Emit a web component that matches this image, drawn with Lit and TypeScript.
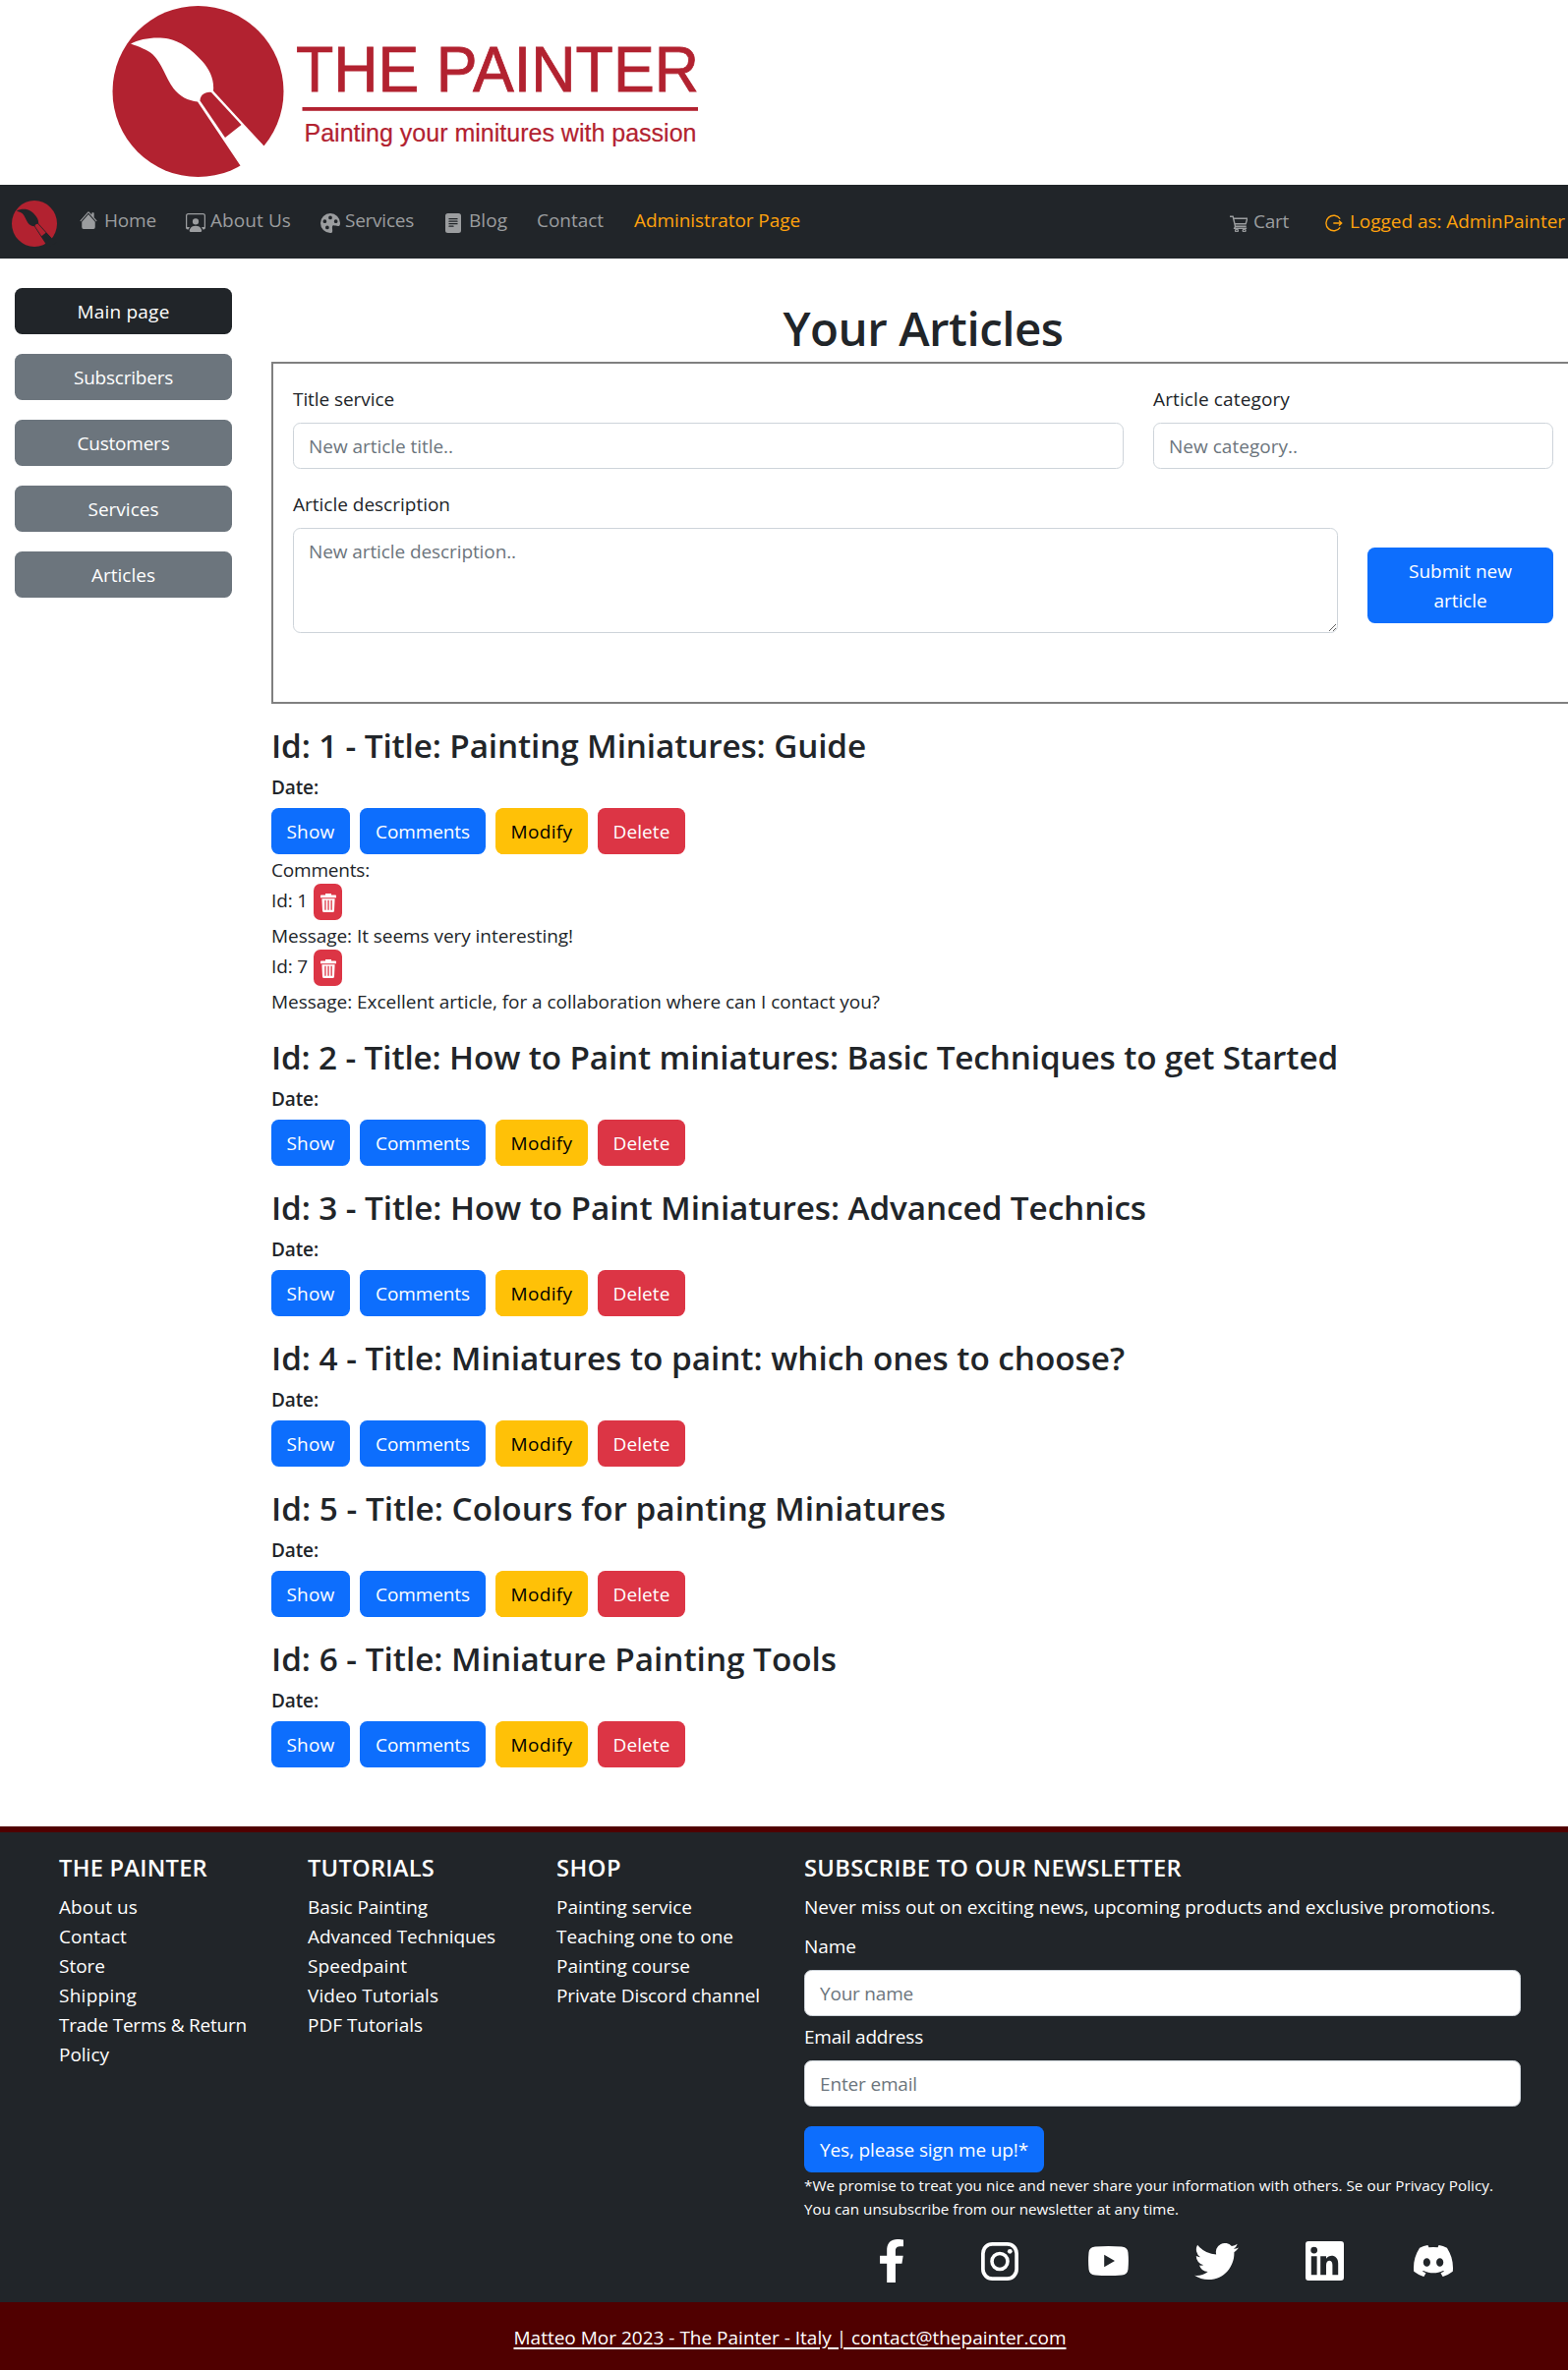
import { LitElement, html, css, svg } from "lit";
import { customElement } from "lit/decorators.js";

const icon = (viewBox: string, w: number, h: number, body: unknown, cls = "") =>
  html`<svg class="icon ${cls}" viewBox=${viewBox} width=${w} height=${h} fill="currentColor" preserveAspectRatio="none">${body}</svg>`;

const house = svg`<path d="M8.707 1.5a1 1 0 0 0-1.414 0L.646 8.146a.5.5 0 0 0 .708.708L8 2.207l6.646 6.647a.5.5 0 0 0 .708-.708L13 5.793V2.5a.5.5 0 0 0-.5-.5h-1a.5.5 0 0 0-.5.5v1.293z"/><path d="m8 3.293 6 6V13.5a1.5 1.5 0 0 1-1.5 1.5h-9A1.5 1.5 0 0 1 2 13.5V9.293z"/>`;
const workspace = svg`<path d="M4 16s-1 0-1-1 1-4 5-4 5 3 5 4-1 1-1 1zm4-5.95a2.5 2.5 0 1 0 0-5 2.5 2.5 0 0 0 0 5"/><path d="M2 1a2 2 0 0 0-2 2v9.5A1.5 1.5 0 0 0 1.5 14h.653a5.4 5.4 0 0 1 1.066-2H1V3a1 1 0 0 1 1-1h12a1 1 0 0 1 1 1v9h-2.219c.554.654.89 1.373 1.066 2h.653a1.5 1.5 0 0 0 1.5-1.5V3a2 2 0 0 0-2-2z"/>`;
const palette = svg`<path d="M12.433 10.07C14.133 10.585 16 11.15 16 8a8 8 0 1 0-8 8c1.996 0 1.826-1.504 1.649-3.08-.124-1.101-.252-2.237.351-2.92.465-.527 1.42-.237 2.433.07M8 5a1.5 1.5 0 1 1 0-3 1.5 1.5 0 0 1 0 3m4.5 3a1.5 1.5 0 1 1 0-3 1.5 1.5 0 0 1 0 3M5 6.5a1.5 1.5 0 1 1-3 0 1.5 1.5 0 0 1 3 0m.5 6.5a1.5 1.5 0 1 1 0-3 1.5 1.5 0 0 1 0 3"/>`;
const fileText = svg`<path d="M12 0H4a2 2 0 0 0-2 2v12a2 2 0 0 0 2 2h8a2 2 0 0 0 2-2V2a2 2 0 0 0-2-2M5 4h6a.5.5 0 0 1 0 1H5a.5.5 0 0 1 0-1m-.5 2.5A.5.5 0 0 1 5 6h6a.5.5 0 0 1 0 1H5a.5.5 0 0 1-.5-.5M5 8h6a.5.5 0 0 1 0 1H5a.5.5 0 0 1 0-1m0 2h3a.5.5 0 0 1 0 1H5a.5.5 0 0 1 0-1"/>`;
const cart = svg`<g fill="none" stroke="currentColor" stroke-width="1.3"><path d="M0 1.2h3l2.2 9.4h10.6M3.4 3h13.4l-1.5 5.2H4.7M5.2 10.6l-.8 1.9h11.8"/><circle cx="6.6" cy="14.6" r="1.3"/><circle cx="13.8" cy="14.6" r="1.3"/></g>`;
const logout = svg`<g fill="none" stroke="currentColor" stroke-width="1.4"><path d="M15.2 4.7A7.8 7.8 0 1 0 15.2 13.3M8.3 9h8.4M14 6.4 16.7 9 14 11.6"/></g>`;
const trash = svg`<path d="M5 0h6v1.7h4.2q.8 0 .8.8v1.9H0V2.500q0-.8.8-.8H5z"/><path fill-rule="evenodd" d="M1.400 5.400h13.200l-.6 12.900q-.1 1.700-1.700 1.700H3.700q-1.600 0-1.700-1.700zM4.300 7v10.500h1.300V7zm3.100 0v10.500h1.300V7zm3.100 0v10.500h1.300V7z"/>`;

const facebook = svg`<path d="M279.14 288l14.22-92.66h-88.91v-60.13c0-25.35 12.42-50.06 52.24-50.06h40.42V6.260S260.43 0 225.36 0c-73.22 0-121.080 44.38-121.080 124.72v70.62H22.89V288h81.39v224h100.17V288z"/>`;
const instagram = svg`<rect x="1.9" y="1.9" width="34.2" height="35.2" rx="9.500" fill="none" stroke="currentColor" stroke-width="3.700"/><circle cx="19" cy="19.500" r="8" fill="none" stroke="currentColor" stroke-width="3.600"/><circle cx="29.300" cy="9.300" r="2.400"/>`;
const youtube = svg`<path fill-rule="evenodd" d="M7 .6Q20.500-.6 34 .6q6 .5 6.500 6 .8 8.400 0 16.800-.5 5.500-6.500 6-13.500 1.200-27 0-6-.5-6.500-6-.8-8.400 0-16.800Q1 1.100 7 .6zM16.200 8.800v12.400L27 15z"/>`;
const twitter = svg`<path d="M5.026 15c6.038 0 9.341-5.003 9.341-9.334q.002-.211-.006-.422A6.700 6.700 0 0 0 16 3.542a6.700 6.700 0 0 1-1.889.518 3.300 3.300 0 0 0 1.447-1.817 6.500 6.500 0 0 1-2.087.793A3.286 3.286 0 0 0 7.875 6.030a9.320 9.320 0 0 1-6.767-3.429 3.290 3.290 0 0 0 1.018 4.382A3.300 3.300 0 0 1 .64 6.575v.045a3.290 3.290 0 0 0 2.632 3.218 3.200 3.200 0 0 1-.865.115 3 3 0 0 1-.614-.057 3.280 3.280 0 0 0 3.067 2.277A6.600 6.600 0 0 1 .78 13.580a6 6 0 0 1-.78-.045A9.340 9.340 0 0 0 5.026 15"/>`;
const linkedin = svg`<path fill-rule="evenodd" d="M3 0h33q3 0 3 3v33.500q0 3-3 3H3q-3 0-3-3V3q0-3 3-3zM5.800 15v18.700h5.800V15zM8.700 5.600a3.400 3.400 0 1 0 0 6.800 3.400 3.400 0 1 0 0-6.800zM15.200 15v18.700H21v-9.800c0-5.600 6.400-5.700 6.400-.3v10.100h5.800V22.400c0-9-9-9.600-12.200-4.800V15z"/>`;
const discord = svg`<path d="M13.545 2.907a13.200 13.200 0 0 0-3.257-1.011.05.05 0 0 0-.052.025c-.141.25-.297.577-.406.833a12.200 12.200 0 0 0-3.658 0 8 8 0 0 0-.412-.833.05.05 0 0 0-.052-.025c-1.125.194-2.220.534-3.257 1.011a.04.04 0 0 0-.021.018C.356 6.024-.213 9.047.066 12.032q.003.022.021.037a13.300 13.300 0 0 0 3.995 2.020.05.05 0 0 0 .056-.019q.463-.63.818-1.329a.05.05 0 0 0-.01-.059l-.018-.011a9 9 0 0 1-1.248-.595.05.05 0 0 1-.02-.066l.015-.019q.127-.095.248-.195a.05.05 0 0 1 .051-.007c2.619 1.196 5.454 1.196 8.041 0a.05.05 0 0 1 .053.007q.121.1.248.195a.05.05 0 0 1-.004.085 8 8 0 0 1-1.249.594.05.05 0 0 0-.03.03.05.05 0 0 0 .003.041c.24.465.515.909.817 1.329a.05.05 0 0 0 .056.019 13.200 13.200 0 0 0 4.001-2.020.05.05 0 0 0 .021-.037c.334-3.451-.559-6.449-2.366-9.106a.03.03 0 0 0-.02-.019m-8.198 7.307c-.789 0-1.438-.724-1.438-1.612s.637-1.613 1.438-1.613c.807 0 1.450.73 1.438 1.613 0 .888-.637 1.612-1.438 1.612m5.316 0c-.788 0-1.438-.724-1.438-1.612s.637-1.613 1.438-1.613c.807 0 1.451.73 1.438 1.613 0 .888-.631 1.612-1.438 1.612"/>`;

// Disc with a paint brush cut out of it, in a 174 x 174 box; `ground` is the colour behind the disc.
const brush = (ground: string) => svg`<circle cx="87" cy="87" r="87" fill="#b22230"/>
  <path fill=${ground} d="M18.500 38.500C28 33 45 31 57 33.500C69 36 80 44 91 56C99 65 103.500 75 102.500 86L103 92L153 141.500L172 158L140 177L129 161L86.500 97.500C77 96.500 68 92 62 84C54 73 50 58 41 49.500C36 45 27 41.500 18.500 38.500z"/>
  <path fill=${ground} d="M102 86L153 141.500L140 150L100 92z"/>
  <path fill="#b22230" d="M89 96.500C89 91 94 87 100.500 88L131 121L114.500 134z"/>`;

/** Text whose tracking is set so that it runs to the given width. */
const fit = (text: string, w: number) => html`<span class="fit" data-w=${w}>${text}</span>`;

const articles: [string, number][] = [
  ["Id: 1 - Title: Painting Miniatures: Guide", 604],
  ["Id: 2 - Title: How to Paint miniatures: Basic Techniques to get Started", 1084],
  ["Id: 3 - Title: How to Paint Miniatures: Advanced Technics", 889],
  ["Id: 4 - Title: Miniatures to paint: which ones to choose?", 867],
  ["Id: 5 - Title: Colours for painting Miniatures", 685],
  ["Id: 6 - Title: Miniature Painting Tools", 574],
];
const comments: [string, string, number][] = [
  ["Id: 1", "Message: It seems very interesting!", 306],
  ["Id: 7", "Message: Excellent article, for a collaboration where can I contact you?", 618],
];
const side: [string, number][] = [["Main page", 93], ["Subscribers", 100], ["Customers", 93], ["Services", 71], ["Articles", 64]];
const columns: { head: [string, number]; items: [string, number][] }[] = [
  { head: ["THE PAINTER", 150], items: [["About us", 79], ["Contact", 68], ["Store", 46], ["Shipping", 78], ["Trade Terms & Return", 190], ["Policy", 50]] },
  { head: ["TUTORIALS", 128], items: [["Basic Painting", 121], ["Advanced Techniques", 190], ["Speedpaint", 100], ["Video Tutorials", 132], ["PDF Tutorials", 116]] },
  { head: ["SHOP", 65], items: [["Painting service", 137], ["Teaching one to one", 179], ["Painting course", 135], ["Private Discord channel", 206]] },
];

@customElement("app-root")
export class AppRoot extends LitElement {
  static styles = css`
    :host { display: block; width: 1595px; height: 2411px; overflow: hidden; background: #fff; color: #212529;
      font: 400 19px/30px "Open Sans", "Noto Sans", sans-serif; }
    * { box-sizing: border-box; }
    .icon { display: block; flex: none; }
    .fit { white-space: nowrap; }
    h1, h2, h3, h4, p, ul { margin: 0; padding: 0; font-weight: 600; }
    p, ul { font-weight: 400; }
    .banner { height: 188px; padding-left: 100px; }
    .banner svg { display: block; }
    nav { height: 75px; background: #212529; display: flex; color: #9b9d9f; padding-left: 12px; align-items: center; }
    .mark { margin: 4px 23px 0 0; }
    .item { display: flex; align-items: center; height: 30px; margin-top: -2px; }
    .item .fit { padding-bottom: 1px; }
    .low { margin-top: 4px; }
    .home { width: 108px; gap: 7px; }
    .home .icon { margin-top: -2px; }
    .about { width: 137px; gap: 5px; }
    .serv { width: 127px; gap: 5px; }
    .blog { width: 93px; gap: 8px; }
    .contact { width: 99px; }
    .admin { width: 606px; color: #ffa20d; }
    .cart { width: 97px; gap: 6px; margin-top: 0; }
    .user { gap: 7px; color: #ffa20d; margin-top: 0; }
    .user .icon { margin-top: 2px; }
    .body { display: flex; height: 1595px; padding: 30px 0 0 15px; }
    aside { width: 221px; flex: none; margin-right: 40px; display: flex; flex-direction: column; gap: 20px; }
    .btn { font: inherit; border: 0; border-radius: 7.500px; height: 47px; padding: 0; color: #fff;
      background: #0d6efd; display: flex; align-items: center; justify-content: center; flex: none; }
    .side { background: #6c757d; }
    .dark { background: #212529; }
    main { width: 1326px; flex: none; }
    h1 { font-size: 47.500px; line-height: 60px; text-align: center; padding-top: 11px; height: 75px; }
    .form { height: 348px; border: 2px solid #808080; padding: 21px 20px; }
    .row { display: flex; gap: 30px; }
    .field { display: flex; flex-direction: column; gap: 9px; }
    .wide { width: 845px; }
    .mid { width: 407px; }
    .desc { width: 1063px; }
    .row + .row { margin-top: 21px; }
    input, textarea { display: block; width: 100%; height: 47px; font: inherit; background: #fff; border: 1px solid #ced4da;
      border-radius: 7.500px; padding: 7px 15px; margin: 0; color: #212529; }
    textarea { height: 107px; resize: both; padding-top: 8px; }
    input::placeholder, textarea::placeholder { color: #6c757d; opacity: 1; }
    .submit { width: 189px; height: 77px; flex-direction: column; margin-top: 59px; padding-top: 1px; }
    .submit .fit { line-height: 30px; }
    .article { padding-top: 20px; }
    h2 { font-size: 33.300px; line-height: 44px; height: 52px; }
    h3 { font-size: 19px; line-height: 26px; height: 34px; }
    .actions { display: flex; gap: 10px; }
    .show { width: 80px; }
    .comments { width: 128px; }
    .modify { width: 94px; background: #ffc107; color: #000; }
    .delete { width: 89px; background: #dc3545; }
    .line { height: 30px; line-height: 32px; }
    .idrow { display: flex; height: 37px; gap: 6px; line-height: 34px; }
    .bin { width: 29px; height: 37px; background: #dc3545; color: #fff; border-radius: 7px; display: flex;
      align-items: center; justify-content: center; padding-top: 2px; }
    footer { background: #212529; border-top: 6px solid #500000; color: #fff; height: 484px; display: flex; padding: 21px 0 0 60px; }
    .col { width: 253px; list-style: none; }
    .col:nth-child(3) { width: 252px; }
    h4 { font-size: 23.700px; line-height: 30px; height: 40px; }
    .news { width: 729px; }
    .news .lab { height: 30px; margin: 10px 0 9px; }
    .news .lab2 { height: 30px; margin: 6px 0 9px; }
    .sign { width: 244px; margin: 20px 0 1px; }
    .small { font-size: 15.200px; line-height: 24px; height: 24px; }
    .social { display: flex; height: 44px; margin: 19px 0 0 34px; }
    .cell { width: 110.200px; display: flex; justify-content: center; align-items: center; }
    .copy { background: #500000; height: 69px; color: #fff; text-align: center; padding-top: 21px; padding-left: 12px; }
    .copy .fit { text-decoration: underline; text-underline-offset: 3px; text-decoration-thickness: 2px; }
  `;

  firstUpdated() {
    const ctx = document.createElement("canvas").getContext("2d")!;
    this.renderRoot.querySelectorAll<HTMLElement>("[data-w]").forEach((el) => {
      const cs = getComputedStyle(el);
      ctx.font = `${cs.fontWeight} ${cs.fontSize} ${cs.fontFamily}`;
      const text = el.getAttribute("placeholder") ?? el.textContent ?? "";
      const gap = (Number(el.dataset.w) + 1 - ctx.measureText(text).width) / text.length;
      el.style.letterSpacing = `${gap.toFixed(3)}px`;
    });
  }

  private actions() {
    return html`<div class="actions">
      <button class="btn show">${fit("Show", 48)}</button>
      <button class="btn comments">${fit("Comments", 95)}</button>
      <button class="btn modify">${fit("Modify", 62)}</button>
      <button class="btn delete">${fit("Delete", 57)}</button>
    </div>`;
  }

  render() {
    return html`
      <header class="banner">
        <svg width="640" height="188" viewBox="100 0 640 188" font-family="Liberation Sans, Arial, sans-serif" fill="#b22230">
          <g transform="translate(114.500 6)">${brush("#fff")}</g>
          <text x="301" y="92.500" font-size="64" textLength="410" lengthAdjust="spacingAndGlyphs" stroke="#b22230" stroke-width=".8">THE PAINTER</text>
          <rect x="307.500" y="109" width="402.500" height="3.800"></rect>
          <text x="309.500" y="143.500" font-size="25.500" textLength="399" lengthAdjust="spacingAndGlyphs" stroke="#b22230" stroke-width=".2">Painting your minitures with passion</text>
        </svg>
      </header>
      <nav>
        ${icon("0 0 174 174", 46, 47, brush("#212529"), "mark")}
        <div class="item home">${icon("0 1 16 14", 18, 18, house)}${fit("Home", 52)}</div>
        <div class="item about">${icon("0 1 16 15", 20, 19, workspace, "low")}${fit("About Us", 81)}</div>
        <div class="item serv">${icon("0 0 16 16", 20, 20, palette, "low")}${fit("Services", 69)}</div>
        <div class="item blog">${icon("2 0 12 16", 16, 20, fileText, "low")}${fit("Blog", 38)}</div>
        <div class="item contact">${fit("Contact", 67)}</div>
        <div class="item admin">${fit("Administrator Page", 168)}</div>
        <div class="item cart">${icon("0 0 17 16", 18, 17, cart, "low")}${fit("Cart", 35)}</div>
        <div class="item user">${icon("0 0 18 18", 18, 18, logout)}${fit("Logged as: AdminPainter", 218)}</div>
      </nav>
      <div class="body">
        <aside>
          ${side.map(([t, w], i) => html`<button class="btn ${i ? "side" : "dark"}">${fit(t, w)}</button>`)}
        </aside>
        <main>
          <h1>${fit("Your Articles", 284)}</h1>
          <div class="form">
            <div class="row">
              <div class="field wide"><label>${fit("Title service", 102)}</label><input placeholder="New article title.." data-w="146" /></div>
              <div class="field mid"><label>${fit("Article category", 138)}</label><input placeholder="New category.." data-w="130" /></div>
            </div>
            <div class="row">
              <div class="field desc"><label>${fit("Article description", 159)}</label><textarea placeholder="New article description.." data-w="210"></textarea></div>
              <button class="btn submit">${fit("Submit new", 104)}${fit("article", 53)}</button>
            </div>
          </div>
          ${articles.map(
            ([t, w], i) => html`<section class="article">
              <h2>${fit(t, w)}</h2>
              <h3>${fit("Date:", 47)}</h3>
              ${this.actions()}
              ${i === 0
                ? html`<div class="line">${fit("Comments:", 99)}</div>
                    ${comments.map(
                      ([id, msg, mw]) => html`<div class="idrow">${fit(id, 36)}<span class="bin">${icon("0 0 16 20", 16, 19, trash)}</span></div>
                        <div class="line">${fit(msg, mw)}</div>`,
                    )}`
                : null}
            </section>`,
          )}
        </main>
      </div>
      <footer>
        ${columns.map(
          (c) => html`<ul class="col"><h4>${fit(...c.head)}</h4>${c.items.map(([t, w]) => html`<li>${fit(t, w)}</li>`)}</ul>`,
        )}
        <div class="news">
          <h4>${fit("SUBSCRIBE TO OUR NEWSLETTER", 383)}</h4>
          <p>${fit("Never miss out on exciting news, upcoming products and exclusive promotions.", 702)}</p>
          <div class="lab">${fit("Name", 52)}</div>
          <input placeholder="Your name" data-w="94" />
          <div class="lab2">${fit("Email address", 120)}</div>
          <input placeholder="Enter email" data-w="98" />
          <button class="btn sign">${fit("Yes, please sign me up!*", 211)}</button>
          <div class="small">${fit("*We promise to treat you nice and never share your information with others. Se our Privacy Policy.", 700)}</div>
          <div class="small">${fit("You can unsubscribe from our newsletter at any time.", 380)}</div>
          <div class="social">
            <span class="cell">${icon("22 0 275 512", 24, 44, facebook)}</span>
            <span class="cell">${icon("0 0 38 39", 38, 39, instagram)}</span>
            <span class="cell">${icon("0 0 41 30", 41, 30, youtube)}</span>
            <span class="cell">${icon("0 2 16 13", 45, 37, twitter)}</span>
            <span class="cell">${icon("0 0 39 39.5", 39, 40, linkedin)}</span>
            <span class="cell">${icon("0 1.9 16 12.2", 40, 32, discord)}</span>
          </div>
        </div>
      </footer>
      <div class="copy">${fit("Matteo Mor 2023 - The Painter - Italy | contact@thepainter.com", 561)}</div>
    `;
  }
}
